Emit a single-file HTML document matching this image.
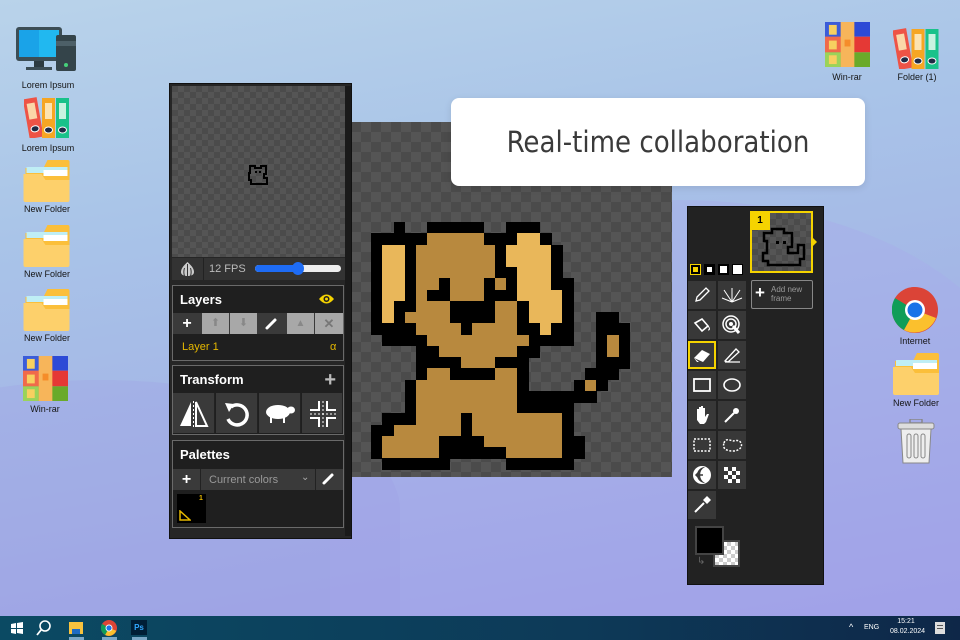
<!DOCTYPE html>
<html><head><meta charset="utf-8">
<style>
*{margin:0;padding:0;box-sizing:border-box}
html{width:960px;height:640px;overflow:hidden}
body{width:960px;height:640px;overflow:hidden;position:relative;font-family:"Liberation Sans",sans-serif;
background:linear-gradient(170deg,#b9d3ea 0%,#a9c4e8 30%,#a3b4e6 60%,#9c9be6 100%);}
.blob{position:absolute;border-radius:50%;}
.lbl{position:absolute;font-size:9px;color:#151515;text-align:center;width:80px;}
.ic{position:absolute}
.taskbar{position:absolute;left:0;top:616px;width:960px;height:24px;background:linear-gradient(90deg,#0b4a63,#0d3a58 60%,#0e2748);}
.panel{position:absolute;background:#262626;}
.chk{background-color:#4b4b4b;background-image:linear-gradient(45deg,#555 25%,transparent 25%,transparent 75%,#555 75%),linear-gradient(45deg,#555 25%,transparent 25%,transparent 75%,#555 75%);background-size:12px 12px;background-position:0 0,6px 6px;}
.box{position:absolute;left:172px;width:172px;border:1px solid #6a6a6a;background:#1f1f1f;}
.hd{color:#fff;font-weight:bold;font-size:13px;padding:6px 7px;}
.btn{position:absolute;background:#3a3a3a;border-right:1px solid #222;}
.tool{position:absolute;width:28px;height:28px;background:#383838;display:flex;align-items:center;justify-content:center}
</style></head><body>
<div class="blob" style="left:330px;top:200px;width:700px;height:440px;border-radius:50% 50% 0 0;background:rgba(170,170,235,0.35)"></div>
<div class="blob" style="left:-200px;top:380px;width:600px;height:260px;border-radius:50% 50% 0 0;background:rgba(160,160,230,0.3)"></div>

<svg width="0" height="0" style="position:absolute">
<defs>
<symbol id="folder" viewBox="0 0 46 42"><path d="M24 0h20a2 2 0 0 1 2 2v38H2V8h18z" fill="#fbbf3a"/><rect x="3" y="7" width="41" height="6" fill="#bfeef5"/><rect x="20" y="10" width="24" height="6" fill="#fff"/><path d="M0 14h18l4 6h24v20a2 2 0 0 1-2 2H2a2 2 0 0 1-2-2z" fill="#fdd06b"/></symbol>
<symbol id="bind" viewBox="0 0 46 42"><g transform="rotate(-10 9 21)"><rect x="2" y="2" width="14" height="40" fill="#ee5346"/><rect x="5" y="7" width="8" height="16" fill="#fbd7a8"/><ellipse cx="9" cy="33" rx="4" ry="3" fill="#1f2a44" stroke="#fff"/></g><rect x="18" y="2" width="13" height="40" fill="#f6a623"/><rect x="21" y="7" width="7" height="16" fill="#fde3b0"/><ellipse cx="24.5" cy="34" rx="4" ry="3" fill="#1f2a44" stroke="#fff"/><rect x="32" y="2" width="13" height="40" fill="#19c28a"/><rect x="35" y="7" width="7" height="16" fill="#c9f3e0"/><ellipse cx="38.5" cy="34" rx="4" ry="3" fill="#1f2a44" stroke="#fff"/></symbol>
<symbol id="rar" viewBox="0 0 46 46"><rect x="0" y="0" width="46" height="15" fill="#2d4ad6"/><rect x="0" y="15" width="46" height="16" fill="#e53935"/><rect x="0" y="31" width="46" height="15" fill="#6aaa2a"/><rect x="0" y="0" width="16" height="15" fill="#3b5cd9"/><rect x="0" y="15" width="16" height="16" fill="#f06a4a"/><rect x="0" y="31" width="16" height="15" fill="#9ad35a"/><rect x="16" y="0" width="14" height="46" fill="#f7b55a"/><rect x="4" y="3" width="8" height="10" fill="#f7d060"/><rect x="4" y="19" width="8" height="9" fill="#f7d060"/><rect x="4" y="34" width="8" height="9" fill="#f7d060"/><rect x="20" y="18" width="6" height="7" fill="#f58d2a"/></symbol>
</defs></svg>

<svg class="ic" style="left:16px;top:27px" width="62" height="44" viewBox="0 0 62 44"><rect x="0" y="0" width="46" height="34" rx="3" fill="#3c4d55"/><rect x="3" y="3" width="40" height="27" fill="#1aa3e8"/><rect x="23" y="3" width="20" height="27" fill="#21b8f0"/><rect x="18" y="34" width="10" height="6" fill="#2c3a40"/><rect x="10" y="40" width="26" height="3" fill="#3c4d55"/><rect x="40" y="8" width="20" height="36" rx="2" fill="#34444a"/><rect x="40" y="14" width="20" height="5" fill="#4d6068"/><circle cx="50" cy="38" r="2" fill="#46d17a"/></svg>
<div class="lbl" style="left:8px;top:80px">Lorem Ipsum</div>
<svg class="ic" style="left:24px;top:96px" width="46" height="42"><use href="#bind"/></svg>
<div class="lbl" style="left:8px;top:143px">Lorem Ipsum</div>
<svg class="ic" style="left:23px;top:160px" width="47" height="42"><use href="#folder"/></svg>
<div class="lbl" style="left:7px;top:204px">New Folder</div>
<svg class="ic" style="left:23px;top:225px" width="47" height="42"><use href="#folder"/></svg>
<div class="lbl" style="left:7px;top:269px">New Folder</div>
<svg class="ic" style="left:23px;top:289px" width="47" height="42"><use href="#folder"/></svg>
<div class="lbl" style="left:7px;top:333px">New Folder</div>
<svg class="ic" style="left:23px;top:356px" width="45" height="45"><use href="#rar"/></svg>
<div class="lbl" style="left:5px;top:404px">Win-rar</div>

<svg class="ic" style="left:825px;top:21px" width="45" height="47"><use href="#rar"/></svg>
<div class="lbl" style="left:807px;top:72px">Win-rar</div>
<svg class="ic" style="left:893px;top:27px" width="47" height="42"><use href="#bind"/></svg>
<div class="lbl" style="left:877px;top:72px">Folder (1)</div>
<svg class="ic" style="left:892px;top:287px" width="46" height="46" viewBox="0 0 46 46"><circle cx="23" cy="23" r="23" fill="#db4437"/><path d="M23 23L3 11A23 23 0 0 0 12 43z" fill="#0f9d58"/><path d="M23 23L12 43A23 23 0 0 0 44 31z" fill="#fbc02d"/><path d="M23 23L3 11A23 23 0 0 1 23 0z" fill="#db4437"/><circle cx="23" cy="23" r="10" fill="#fff"/><circle cx="23" cy="23" r="7.5" fill="#1a73e8"/></svg>
<div class="lbl" style="left:875px;top:336px">Internet</div>
<svg class="ic" style="left:893px;top:353px" width="46" height="42"><use href="#folder"/></svg>
<div class="lbl" style="left:876px;top:398px">New Folder</div>
<svg class="ic" style="left:897px;top:419px" width="38" height="45" viewBox="0 0 38 45"><rect x="13" y="0" width="12" height="4" rx="1" fill="none" stroke="#888" stroke-width="1.5"/><rect x="1" y="4" width="36" height="6" rx="2" fill="#ddd" stroke="#888"/><path d="M4 10h30l-2 34H6z" fill="#eee" stroke="#888"/><rect x="10" y="15" width="4" height="24" rx="2" fill="none" stroke="#888"/><rect x="17" y="15" width="4" height="24" rx="2" fill="none" stroke="#888"/><rect x="24" y="15" width="4" height="24" rx="2" fill="none" stroke="#888"/></svg>

<div class="chk" style="position:absolute;left:351px;top:122px;width:321px;height:355px;background-size:20px 20px;background-position:0 0,10px 10px;"></div>
<div id="dog" style="position:absolute;left:371px;top:222px"></div>

<div style="position:absolute;left:451px;top:98px;width:414px;height:88px;background:#fff;border-radius:8px;box-shadow:0 2px 8px rgba(0,0,0,0.1);display:flex;align-items:center;justify-content:center;font-family:'DejaVu Sans Condensed','DejaVu Sans',sans-serif;font-size:29px;color:#3a3a3a;">Real-time collaboration</div>

<div class="panel" style="left:169px;top:83px;width:183px;height:456px;border:1px solid #111"></div>
<div style="position:absolute;left:345px;top:86px;width:6px;height:450px;background:#1a1a1a"></div>
<div class="chk" style="position:absolute;left:172px;top:86px;width:173px;height:171px"></div>
<svg style="position:absolute;left:247px;top:163px" width="22" height="24" viewBox="0 0 22 24"><path d="M3 3h5v2h6V3h5v8h-2v4h3v6H4v-4h-2V10H3z" fill="none" stroke="#000" stroke-width="2"/><rect x="8" y="8" width="2" height="2"/><rect x="12" y="8" width="2" height="2"/></svg>
<div style="position:absolute;left:172px;top:258px;width:173px;height:22px;background:#333"></div>
<div style="position:absolute;left:203px;top:258px;width:1px;height:22px;background:#222"></div>
<svg style="position:absolute;left:179px;top:261px" width="17" height="16" viewBox="0 0 17 16"><path d="M8.5 1C4 5 2 8 2 11c0 3 3 4 6.5 4S15 14 15 11C15 8 13 5 8.5 1z" fill="#ccc"/><path d="M8.5 3v12M5.5 7c-1 3-1 5 0 8M11.5 7c1 3 1 5 0 8" stroke="#333" stroke-width="1" fill="none"/></svg>
<div style="position:absolute;left:209px;top:263px;font-size:11px;color:#bbb">12 FPS</div>
<div style="position:absolute;left:255px;top:265px;width:86px;height:7px;border-radius:4px;background:#eee"></div>
<div style="position:absolute;left:255px;top:265px;width:43px;height:7px;border-radius:4px;background:#1e6cf5"></div>
<div style="position:absolute;left:292px;top:262px;width:12px;height:13px;border-radius:50%;background:#1e6cf5"></div>

<div class="box" style="top:285px;height:76px">
<div class="hd">Layers</div>
<svg style="position:absolute;right:8px;top:7px" width="17" height="12" viewBox="0 0 17 12"><path d="M1 6Q8.5-3 16 6Q8.5 15 1 6z" fill="#f5d300"/><circle cx="8.5" cy="6" r="3" fill="#1f1f1f"/><circle cx="8.5" cy="6" r="1.5" fill="#f5d300"/></svg>
</div>
<div style="position:absolute;left:173px;top:313px;width:170px;height:21px;background:#3a3a3a"></div>
<div style="position:absolute;left:173px;top:313px;width:28px;height:21px;color:#fff;font-weight:bold;font-size:16px;text-align:center;line-height:21px">+</div>
<div style="position:absolute;left:202px;top:313px;width:27px;height:21px;background:#a8a8a8;color:#888;font-size:11px;text-align:center;line-height:21px">⬆</div>
<div style="position:absolute;left:230px;top:313px;width:27px;height:21px;background:#a8a8a8;color:#888;font-size:11px;text-align:center;line-height:21px">⬇</div>
<svg style="position:absolute;left:264px;top:317px" width="14" height="14"><path d="M3 11L11 3" stroke="#fff" stroke-width="3" stroke-linecap="round"/></svg>
<div style="position:absolute;left:287px;top:313px;width:27px;height:21px;background:#a8a8a8;color:#888;font-size:10px;text-align:center;line-height:21px">▲</div>
<div style="position:absolute;left:315px;top:313px;width:28px;height:21px;background:#a8a8a8;color:#777;font-size:13px;font-weight:bold;text-align:center;line-height:21px">✕</div>
<div style="position:absolute;left:182px;top:341px;font-size:11px;color:#e6b800">Layer 1</div>
<div style="position:absolute;left:330px;top:341px;font-size:11px;color:#e6b800">α</div>

<div class="box" style="top:365px;height:70px">
<div class="hd">Transform</div>
<div style="position:absolute;right:7px;top:3px;color:#bbb;font-size:20px;font-weight:bold">+</div>
</div>
<div class="btn" style="left:173px;top:393px;width:42px;height:40px"></div>
<div class="btn" style="left:216px;top:393px;width:42px;height:40px"></div>
<div class="btn" style="left:259px;top:393px;width:42px;height:40px"></div>
<div class="btn" style="left:302px;top:393px;width:41px;height:40px"></div>
<svg style="position:absolute;left:178px;top:399px" width="32" height="30"><path d="M13 3L2 27h11z" fill="#fff"/><path d="M18 3l11 24H18z" fill="none" stroke="#fff" stroke-width="2"/><path d="M15.5 2v27" stroke="#fff" stroke-dasharray="2 2"/></svg>
<svg style="position:absolute;left:222px;top:399px" width="30" height="30"><path d="M9 8A10 10 0 1 1 6 20" fill="none" stroke="#fff" stroke-width="3.5"/><path d="M3 4l9 1-5 8z" fill="#fff"/></svg>
<svg style="position:absolute;left:264px;top:402px" width="32" height="22"><ellipse cx="14" cy="10" rx="12" ry="7" fill="#fff"/><ellipse cx="27" cy="8" rx="4" ry="3.5" fill="#fff"/><rect x="6" y="14" width="2" height="7" fill="#fff"/><rect x="19" y="14" width="2" height="7" fill="#fff"/></svg>
<svg style="position:absolute;left:308px;top:399px" width="30" height="30"><path d="M11 2v9H2M19 2v9h9M11 28v-9H2M19 28v-9h9" fill="none" stroke="#fff" stroke-width="2"/><path d="M15 2v26M2 15h26" stroke="#fff" stroke-dasharray="2 2"/></svg>

<div class="box" style="top:440px;height:88px">
<div class="hd">Palettes</div>
</div>
<div style="position:absolute;left:173px;top:469px;width:170px;height:21px;background:#3a3a3a"></div>
<div style="position:absolute;left:173px;top:469px;width:28px;height:21px;color:#fff;font-weight:bold;font-size:16px;text-align:center;line-height:21px;border-right:1px solid #222">+</div>
<div style="position:absolute;left:209px;top:474px;font-size:11px;color:#999">Current colors</div>
<div style="position:absolute;left:301px;top:472px;font-size:10px;color:#aaa">⌄</div>
<div style="position:absolute;left:315px;top:469px;width:1px;height:21px;background:#222"></div>
<svg style="position:absolute;left:321px;top:472px" width="14" height="14"><path d="M3 11L11 3" stroke="#fff" stroke-width="3" stroke-linecap="round"/></svg>
<div style="position:absolute;left:177px;top:494px;width:29px;height:29px;background:#000"></div>
<div style="position:absolute;left:199px;top:495px;font-size:7px;color:#e6b800;font-weight:bold">1</div>
<svg style="position:absolute;left:179px;top:510px" width="12" height="11"><path d="M1 10h10L1 1z" fill="none" stroke="#e6b800" stroke-width="1.5"/></svg>

<div class="panel" style="left:687px;top:206px;width:137px;height:379px;background:#222;border:1px solid #111"></div>
<div style="position:absolute;left:750px;top:211px;width:63px;height:62px;border:2px solid #f5d300;" class="chk"></div>
<div style="position:absolute;left:750px;top:211px;width:20px;height:19px;background:#f5d300;color:#000;font-size:10px;font-weight:bold;text-align:center;line-height:19px">1</div>
<svg style="position:absolute;left:758px;top:227px" width="50" height="42" viewBox="0 0 50 42"><path d="M6 6h8V2h12v4h8v14h-4v6h10v-8h6v14h-4v6H10v-4H5v-8h4V14H6z" fill="none" stroke="#000" stroke-width="2.5"/><rect x="18" y="14" width="3" height="3"/><rect x="25" y="14" width="3" height="3"/></svg>
<div style="position:absolute;left:813px;top:238px;width:0;height:0;border-left:4px solid #f5d300;border-top:4px solid transparent;border-bottom:4px solid transparent"></div>
<div style="position:absolute;left:751px;top:280px;width:62px;height:29px;border:1px solid #888;border-radius:2px;background:#2a2a2a"></div>
<div style="position:absolute;left:755px;top:283px;color:#fff;font-size:17px;font-weight:bold">+</div>
<div style="position:absolute;left:771px;top:285px;color:#999;font-size:8px;line-height:9px">Add new<br>frame</div>
<div style="position:absolute;left:690px;top:264px;width:11px;height:11px;border:1px solid #f5d300;background:#000"><div style="margin:2px;width:5px;height:5px;background:#f5d300"></div></div>
<div style="position:absolute;left:704px;top:264px;width:11px;height:11px;background:#000"><div style="margin:3px;width:5px;height:5px;background:#fff"></div></div>
<div style="position:absolute;left:718px;top:264px;width:11px;height:11px;background:#000"><div style="margin:2px;width:7px;height:7px;background:#fff"></div></div>
<div style="position:absolute;left:732px;top:264px;width:11px;height:11px;background:#000"><div style="margin:1px;width:9px;height:9px;background:#fff"></div></div>

<div class="tool" style="left:688px;top:281px"><svg width="18" height="18"><path d="M3 15l1-4 9-9 3 3-9 9z" fill="none" stroke="#fff" stroke-width="1.3"/></svg></div>
<div class="tool" style="left:718px;top:281px"><svg width="22" height="18"><path d="M11 16L3 4M11 16L19 4M11 16V2M11 16L1 12M11 16l10-4" stroke="#fff" stroke-width="1"/></svg></div>
<div class="tool" style="left:688px;top:311px"><svg width="20" height="18"><path d="M3 7l7-4 6 7-6 5z" fill="none" stroke="#fff" stroke-width="1.6"/><path d="M16 10c2 2 2 4 0 4" stroke="#fff" fill="none"/></svg></div>
<div class="tool" style="left:718px;top:311px"><svg width="22" height="22"><circle cx="10" cy="10" r="8" fill="none" stroke="#fff" stroke-width="1.5"/><circle cx="10" cy="10" r="5" fill="none" stroke="#fff" stroke-width="1.5"/><circle cx="10" cy="10" r="2" fill="#fff"/><path d="M12 12l6 7" stroke="#fff" stroke-width="3"/></svg></div>
<div class="tool" style="left:688px;top:341px;border:2px solid #f5d300"><svg width="20" height="16"><path d="M2 11l8-8 8 4-7 8H5z" fill="#fff"/><path d="M2 11l5 4h4" fill="#383838"/></svg></div>
<div class="tool" style="left:718px;top:341px"><svg width="20" height="20"><path d="M3 16l11-12 3 3L6 17zM3 17h15" fill="none" stroke="#fff" stroke-width="1.3"/></svg></div>
<div class="tool" style="left:688px;top:371px"><svg width="20" height="16"><rect x="2" y="2" width="16" height="12" fill="none" stroke="#fff" stroke-width="1.8"/></svg></div>
<div class="tool" style="left:718px;top:371px"><svg width="20" height="16"><ellipse cx="10" cy="8" rx="8" ry="6" fill="none" stroke="#fff" stroke-width="1.6"/></svg></div>
<div class="tool" style="left:688px;top:401px"><svg width="18" height="20"><path d="M4 11V4h2v6V2h2v8V1h2v9V3h2v9l2-3h2l-3 8-2 2H7l-3-4z" fill="#fff"/></svg></div>
<div class="tool" style="left:718px;top:401px"><svg width="20" height="20"><path d="M3 17l9-9" stroke="#fff" stroke-width="2"/><circle cx="14" cy="6" r="3" fill="#fff"/></svg></div>
<div class="tool" style="left:688px;top:431px"><svg width="20" height="16"><rect x="2" y="2" width="16" height="12" fill="none" stroke="#fff" stroke-width="1.5" stroke-dasharray="2 1.5"/></svg></div>
<div class="tool" style="left:718px;top:431px"><svg width="22" height="16"><path d="M3 6c2-6 7-2 9-2s6-2 8 2-2 8-8 8-11-2-9-8z" fill="none" stroke="#fff" stroke-width="1.5" stroke-dasharray="2 1.5"/></svg></div>
<div class="tool" style="left:688px;top:461px"><svg width="20" height="20"><circle cx="10" cy="10" r="9" fill="#fff"/><path d="M13 2a8 8 0 0 0 0 16 9 9 0 0 1 0-16" fill="#383838"/><path d="M4 10h7M7 7l-3 3 3 3" stroke="#383838" stroke-width="1.5" fill="none"/></svg></div>
<div class="tool" style="left:718px;top:461px"><svg width="16" height="16"><path d="M0 0h4v4H0zM8 0h4v4H8zM4 4h4v4H4zM12 4h4v4h-4zM0 8h4v4H0zM8 8h4v4H8zM4 12h4v4H4zM12 12h4v4h-4z" fill="#fff"/></svg></div>
<div class="tool" style="left:688px;top:491px"><svg width="20" height="20"><path d="M3 17l9-9" stroke="#fff" stroke-width="2"/><path d="M11 5l4-4 4 4-4 4z" fill="#fff"/></svg></div>

<div style="position:absolute;left:713px;top:540px;width:27px;height:27px;border:2px solid #444;background-color:#fff;background-image:linear-gradient(45deg,#ccc 25%,transparent 25%,transparent 75%,#ccc 75%),linear-gradient(45deg,#ccc 25%,transparent 25%,transparent 75%,#ccc 75%);background-size:8px 8px;background-position:0 0,4px 4px"></div>
<div style="position:absolute;left:695px;top:526px;width:29px;height:29px;background:#000;border:2px solid #444"></div>
<div style="position:absolute;left:697px;top:556px;color:#666;font-size:10px">↳</div>

<div class="taskbar"></div>
<svg style="position:absolute;left:11px;top:622px" width="12" height="12"><path d="M0 2l5-1v5H0zM6 1l6-1v6H6zM0 7h5v5l-5-1zM6 7h6v5l-6-1z" fill="#fff"/></svg>
<svg style="position:absolute;left:36px;top:620px" width="16" height="16"><circle cx="9" cy="6" r="5" fill="none" stroke="#fff" stroke-width="1.6"/><path d="M5 10l-4 5" stroke="#fff" stroke-width="1.8"/></svg>
<svg style="position:absolute;left:69px;top:621px" width="14" height="13"><rect x="0" y="1" width="14" height="12" fill="#f8c33e"/><rect x="3" y="8" width="8" height="5" fill="#1e6bc4"/></svg>
<div style="position:absolute;left:69px;top:637px;width:15px;height:3px;background:#7aa7c7"></div>
<svg style="position:absolute;left:101px;top:620px" width="16" height="16" viewBox="0 0 46 46"><circle cx="23" cy="23" r="23" fill="#db4437"/><path d="M23 23L3 11A23 23 0 0 0 12 43z" fill="#0f9d58"/><path d="M23 23L12 43A23 23 0 0 0 44 31z" fill="#fbc02d"/><circle cx="23" cy="23" r="10" fill="#fff"/><circle cx="23" cy="23" r="7.5" fill="#1a73e8"/></svg>
<div style="position:absolute;left:102px;top:637px;width:15px;height:3px;background:#7aa7c7"></div>
<div style="position:absolute;left:131px;top:620px;width:16px;height:15px;background:#001e36;color:#31a8ff;font-size:8px;font-weight:bold;text-align:center;line-height:15px">Ps</div>
<div style="position:absolute;left:132px;top:637px;width:15px;height:3px;background:#7aa7c7"></div>
<div style="position:absolute;left:849px;top:622px;color:#fff;font-size:9px">^</div>
<div style="position:absolute;left:864px;top:624px;color:#fff;font-size:7px">ENG</div>
<div style="position:absolute;left:890px;top:617px;color:#fff;font-size:7px;width:32px;text-align:center;line-height:10px">15:21<br>08.02.2024</div>
<svg style="position:absolute;left:935px;top:622px" width="10" height="12"><rect x="0" y="0" width="10" height="12" fill="#ddd"/><rect x="2" y="3" width="6" height="1" fill="#555"/><rect x="2" y="6" width="6" height="1" fill="#555"/></svg>

<script>
var rows=[
"..k..kkkkk..kkk........",
"kkkkktttttkkkllk.......",
"kllktttttttkllllk......",
"kllktttttttkllllk......",
"kllktttttttkklllk......",
"kllkttktttktklllkk.....",
"kllktkktttkkkllllk.....",
"klkktttkkkkttklllk.....",
"klkttttkkkkttklllk..kk.",
"kkkkttttkttttkklkk..kkk",
".kkkktttttttttkkkk..ktk",
"....kktttttttkk.....ktk",
"....kkkktttkkk......kkk",
"....kttkkkkttk.....kkk.",
"...ktttttttttk....ktk..",
"...ktttttttttkkkkkkk...",
"...ktttttttttkkkkk.....",
".kkkttttkttttttttk.....",
"kkttttttkttttttttk.....",
"ktttttkkkktttttttkk....",
"ktttttkkkkkktttttkk....",
".kkkkkk.....kkkkkk....."];
var col={k:"#000",t:"#b8893e",l:"#e9b75a"};
var s=11.25,h="";
for(var r=0;r<rows.length;r++)for(var c=0;c<rows[r].length;c++){var ch=rows[r][c];if(col[ch])h+='<div style="position:absolute;left:'+(c*s).toFixed(2)+'px;top:'+(r*s).toFixed(2)+'px;width:'+(s+0.5)+'px;height:'+(s+0.5)+'px;background:'+col[ch]+'"></div>';}
document.getElementById('dog').innerHTML=h;
</script>
</body></html>
